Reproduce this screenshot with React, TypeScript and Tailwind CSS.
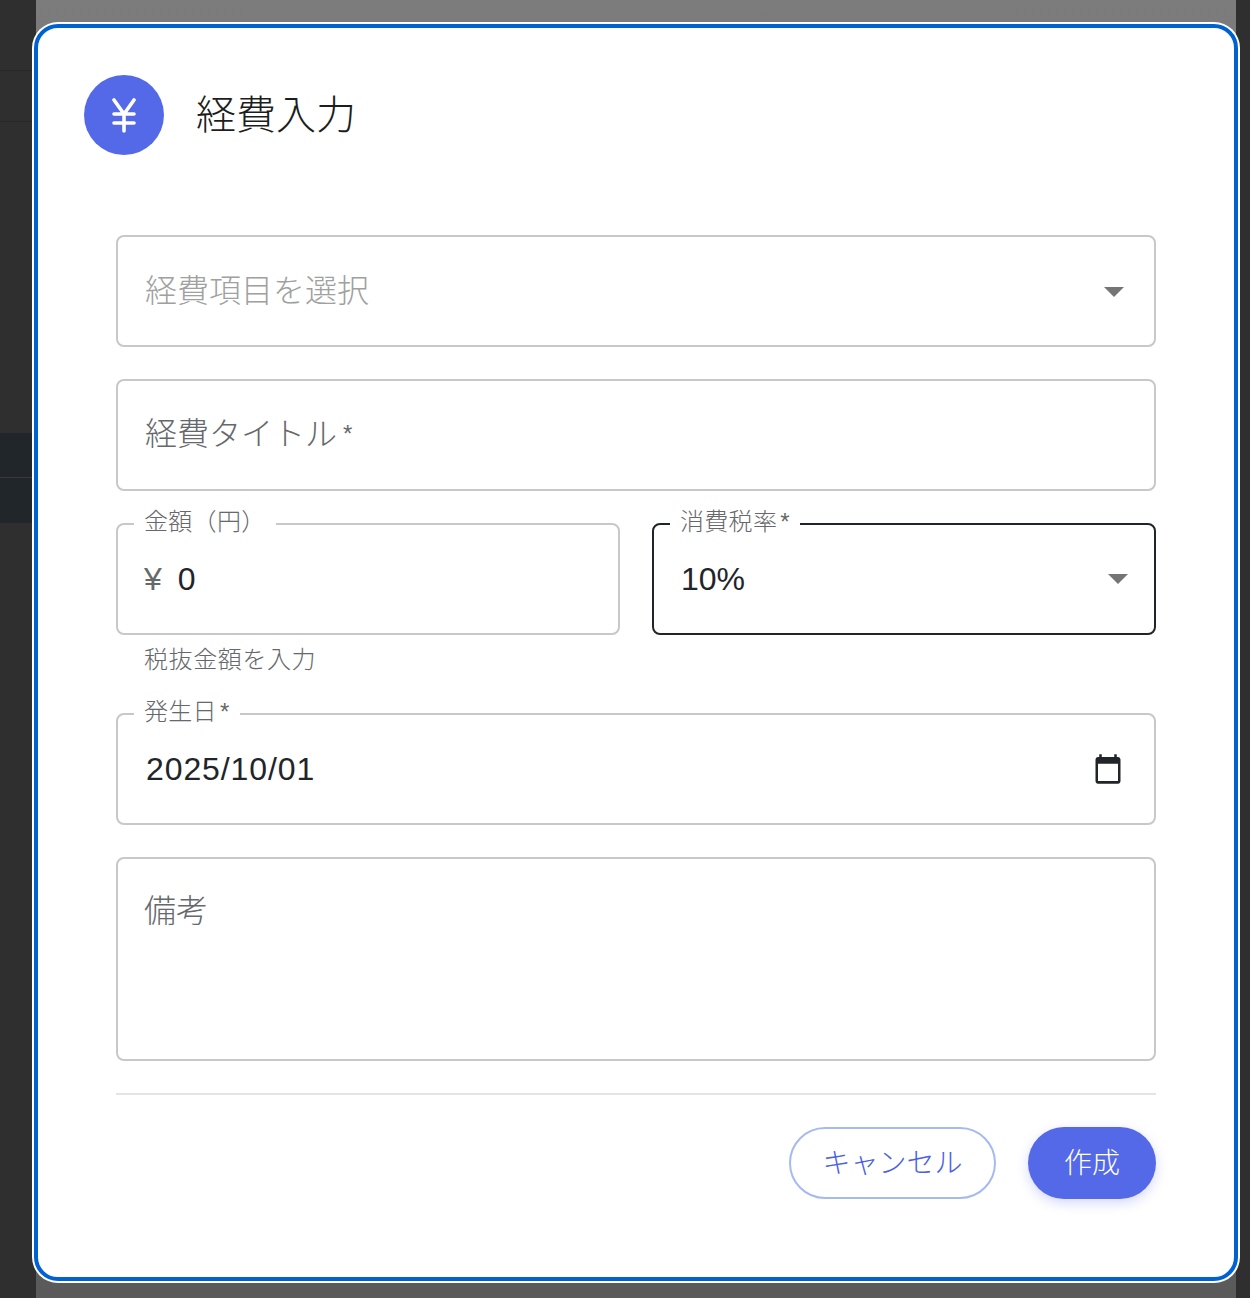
import React from "react";

const font = "font-['Liberation_Sans','Noto_Sans_CJK_JP',sans-serif]";

const Caret = ({ className }: { className: string }) => (
  <svg viewBox="0 0 20 10" className={className}>
    <path d="M0 0h20L10 10z" fill="#757575" />
  </svg>
);

const Backdrop = () => (
  <div className="flex h-full w-full">
    <div className="flex h-full w-[36px] shrink-0 flex-col bg-[#2f2f2f]">
      <div className="h-[71px] border-b border-[#282828]" />
      <div className="h-[51px] border-b border-[#282828]" />
      <div className="h-[311px]" />
      <div className="h-[45px] border-b border-[#3a3a3a] bg-[#20262a]" />
      <div className="h-[45px] bg-[#20262a]" />
    </div>
    <div className="h-full flex-1 bg-gradient-to-b from-[#7c7c7c] via-[#6a6a6a] to-[#5a5a5a]" />
    <div className="h-full w-[14px] shrink-0 bg-[#2f2f2f]" />
  </div>
);

const Field = ({
  label,
  required,
  focused,
  className,
  children,
}: {
  label?: string;
  required?: boolean;
  focused?: boolean;
  className: string;
  children: React.ReactNode;
}) => (
  <div
    className={`relative rounded-[8px] border-2 ${
      focused ? "border-[#212529]" : "border-[#c8c8c8]"
    } ${className}`}
  >
    {label && (
      <span className="absolute top-[-17px] left-[16px] bg-white px-[10px] text-[24px] leading-[28px] font-light tracking-[0.3px] whitespace-nowrap text-[#66686b]">
        {label}
        {required && <span className="ml-[3px]">*</span>}
      </span>
    )}
    {children}
  </div>
);

export default function App() {
  return (
    <div className={`relative h-[1298px] w-[1250px] overflow-hidden ${font}`}>
      <Backdrop />

      {/* dialog */}
      <div className="absolute top-[22px] left-[32px] h-[1261px] w-[1208px] rounded-[26px] bg-white p-[2px]">
        <div className="flex h-full flex-col rounded-[24px] border-[4px] border-[#0061d1] bg-white pt-[47px] pr-[78px] pl-[46px]">
          <div className="flex items-center gap-[32px]">
            <div className="flex h-[80px] w-[80px] items-center justify-center rounded-full bg-[#5469e8]">
              <svg viewBox="0 0 24 35" className="h-[35px] w-[24px]" fill="none" stroke="white" strokeWidth="3.6" strokeLinecap="round" strokeLinejoin="round">
                <path d="M2 2l10 14L22 2M12 16v17M2 16h20M2 25h20" />
              </svg>
            </div>
            <h2 className="text-[40px] leading-[48px] font-light text-[#1c1d20]">経費入力</h2>
          </div>

          <div className="mt-[80px] flex flex-col pl-[32px]">
            <Field className="flex h-[112px] items-center justify-between pr-[30px] pl-[27px]">
              <span className="text-[32px] font-light text-[#a0a0a0]">経費項目を選択</span>
              <Caret className="mt-[1px] h-[10px] w-[20px]" />
            </Field>

            <Field className="mt-[32px] flex h-[112px] items-center pb-[2px] pl-[27px]">
              <span className="text-[32px] font-light text-[#66686b]">
                経費タイトル<span className="ml-[6px] align-[3px] text-[24px]">*</span>
              </span>
            </Field>

            <div className="mt-[32px] grid grid-cols-2 gap-[32px]">
              <div>
                <Field label="金額（円）" className="flex h-[112px] items-center pl-[26px]">
                  <span className="text-[32px] font-light text-[#66686b]">¥</span>
                  <span className="ml-[16px] text-[32px] text-[#212529]">0</span>
                </Field>
                <p className="mt-[10px] ml-[28px] text-[24px] leading-[30px] tracking-[0.6px] font-light text-[#66686b]">税抜金額を入力</p>
              </div>
              <Field focused required label="消費税率" className="flex h-[112px] items-center justify-between pr-[26px] pl-[27px]">
                <span className="text-[32px] text-[#212529]">10%</span>
                <Caret className="h-[10px] w-[20px]" />
              </Field>
            </div>

            <Field required label="発生日" className="mt-[38px] flex h-[112px] items-center justify-between pr-[31px] pl-[28px]">
              <span className="text-[32px] tracking-[0.9px] text-[#212529]">2025/10/01</span>
              <svg viewBox="0 0 24 24" className="h-[32px] w-[30px]" preserveAspectRatio="none">
                <path fill="#212529" d="M20 3h-1V1h-2v2H7V1H5v2H4c-1.1 0-2 .9-2 2v16c0 1.1.9 2 2 2h16c1.1 0 2-.9 2-2V5c0-1.1-.9-2-2-2zm0 18H4V8h16v13z" />
              </svg>
            </Field>

            <Field className="mt-[32px] h-[204px] pt-[28px] pl-[26px]">
              <span className="text-[32px] leading-[48px] font-light text-[#66686b]">備考</span>
            </Field>

            <div className="mt-[32px] border-t-2 border-[#e4e4e4]" />

            <div className="mt-[32px] flex justify-end gap-[32px]">
              <button className="h-[72px] w-[207px] rounded-full border-2 border-[#a6baf0] bg-white pt-[2px] text-[28px] font-light text-[#4a60e6]">
                キャンセル
              </button>
              <button className="h-[72px] w-[128px] rounded-full bg-[#5469e8] pt-[2px] text-[28px] font-light text-white shadow-[0_4px_12px_rgba(84,105,232,0.25)]">
                作成
              </button>
            </div>
          </div>
        </div>
      </div>
    </div>
  );
}
